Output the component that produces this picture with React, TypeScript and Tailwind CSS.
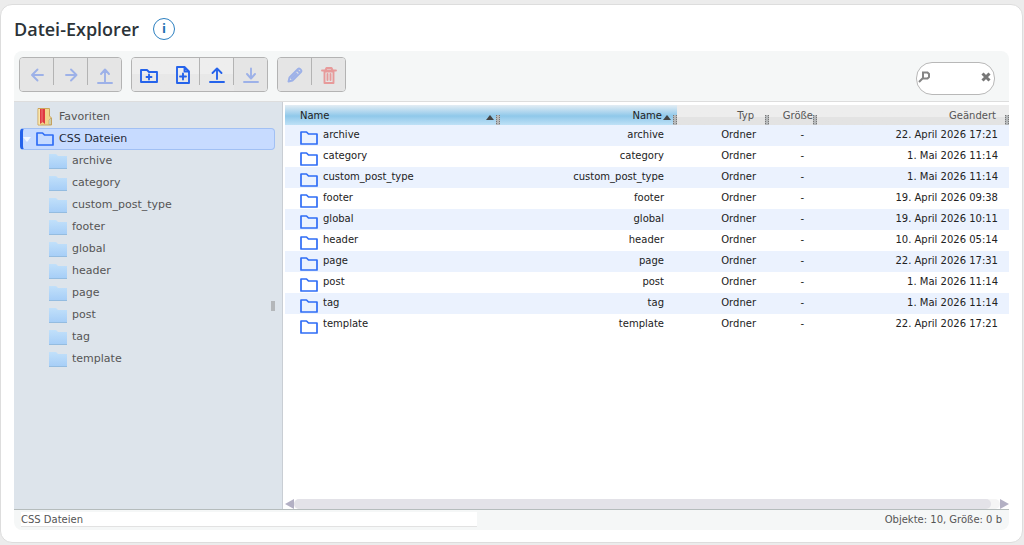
import type { ReactNode } from "react";
import { clsx } from "clsx";

const folders = [
  { name: "archive", date: "22. April 2026 17:21" },
  { name: "category", date: "1. Mai 2026 11:14" },
  { name: "custom_post_type", date: "1. Mai 2026 11:14" },
  { name: "footer", date: "19. April 2026 09:38" },
  { name: "global", date: "19. April 2026 10:11" },
  { name: "header", date: "10. April 2026 05:14" },
  { name: "page", date: "22. April 2026 17:31" },
  { name: "post", date: "1. Mai 2026 11:14" },
  { name: "tag", date: "1. Mai 2026 11:14" },
  { name: "template", date: "22. April 2026 17:21" },
];

type Tool = { label: string; icon: ReactNode; disabled?: boolean; danger?: boolean };

const toolGroups: Tool[][] = [
  [
    { label: "Zurück", disabled: true, icon: <path d="M15 9H4.500M9.500 3.500L4 9l5.500 5.500" /> },
    { label: "Vorwärts", disabled: true, icon: <path d="M4 9h10.500M9 3.500L14.500 9 9 14.500" /> },
    { label: "Übergeordneter Ordner", disabled: true, icon: <path d="M9 16V4M5 8l4-4.500L13 8M2 17h14" /> },
  ],
  [
    { label: "Neuer Ordner", icon: <path d="M1 4h6l2 2h8v10H1zM9 8.500v5M6.500 11h5" /> },
    { label: "Neue Datei", icon: <path d="M3 1h7.500L15 5.500V17H3zM10.500 1v4.500H15M9 7.500v6M6 10.500h6" /> },
    { label: "Hochladen", icon: <path d="M9 13V3M4.500 7L9 2.500 13.500 7M2 16h14" /> },
    { label: "Herunterladen", disabled: true, icon: <path d="M9 2.500V12M5 8l4 4.500L13 8M2 16h14" /> },
  ],
  [
    { label: "Umbenennen", disabled: true, icon: <path d="M2.500 15.500l1-4L12 3q1-1 2 0l1 1q1 1 0 2l-8.500 8.500zM11 4l3 3M5.500 12.500l5-5" /> },
    { label: "Löschen", disabled: true, danger: true, icon: <path d="M2 4.500h14M5.500 4l1-2h5l1 2M4.500 5v12h9V5M7.500 8v6M10.500 8v6M6 5.500h6" /> },
  ],
];

function FolderOutline() {
  return (
    <svg width="18" height="14" viewBox="0 0 18 14" fill="none" stroke="#2f6df6" strokeWidth="1.700" strokeLinejoin="round" className="shrink-0" aria-hidden="true">
      <path d="M1 1h5.500l2 2H17v10H1z" />
    </svg>
  );
}

function FolderFilled() {
  return (
    <svg width="18" height="16" viewBox="0 0 18 16" className="shrink-0" aria-hidden="true">
      <defs>
        <linearGradient id="folder" x1="0" y1="0" x2="0" y2="1">
          <stop offset="0" stopColor="#c1e0fa" />
          <stop offset="1" stopColor="#a5cdf7" />
        </linearGradient>
      </defs>
      <path d="M0 1h7l2 2h9v13H0z" fill="url(#folder)" />
      <path d="M0 15.500h18" stroke="#94bce0" />
    </svg>
  );
}

function Favorites() {
  return (
    <svg width="16" height="18" viewBox="0 0 16 18" className="shrink-0" aria-hidden="true">
      <path d="M1 .5h11.500V8l2 2v7H1z" fill="#f1d58b" stroke="#cba45c" />
      <path d="M1.500 1h2v15.500h-2z" fill="#fae8b1" />
      <path d="M3 1h5v15l-2.500-2L3 16z" fill="#df3940" />
      <path d="M4.500 1h1v13h-1z" fill="#f0787a" />
      <path d="M12 12l2-2v6.500h-2z" fill="#d7e3cb" stroke="#b79c64" strokeWidth=".6" />
    </svg>
  );
}

function ToolButton({ tool, last, divider }: { tool: Tool; last: boolean; divider: boolean }) {
  return (
    <button
      type="button"
      aria-label={tool.label}
      disabled={tool.disabled}
      className={clsx(
        "relative flex h-[33px] items-center justify-center",
        last ? "w-[33px]" : "w-[34px]",
        tool.disabled ? "bg-[#e5e5e5]" : "bg-linear-to-b from-[#eeeeee] from-50% to-[#e8e8e8] to-50%",
        tool.danger ? "text-[#e79a9a]" : tool.disabled ? "text-[#9db1e8]" : "text-[#2563eb]",
      )}
    >
      <svg width="18" height="18" viewBox="0 0 18 18" fill="none" stroke="currentColor" strokeWidth="1.900" strokeLinecap="round" strokeLinejoin="round" aria-hidden="true">
        {tool.icon}
      </svg>
      {divider && <span className="absolute top-0 right-0 h-[27px] w-px bg-[#b3b3b3]" />}
    </button>
  );
}

function Toolbar() {
  return (
    <div className="flex h-[51px] items-start justify-between rounded-t-lg border-b border-[#dddddd] bg-[#f5f7f7] pt-[6px] pr-[14px] pl-[5px]">
      <div className="flex gap-[9px]">
        {toolGroups.map((group) => (
          <div key={group[0].label} className="flex overflow-hidden rounded border border-[#b3b3b3]">
            {group.map((tool, i) => {
              const last = i === group.length - 1;
              return <ToolButton key={tool.label} tool={tool} last={last} divider={!last && tool.label !== "Neuer Ordner"} />;
            })}
          </div>
        ))}
      </div>
      <form className="mt-[5px] flex h-[33px] w-[79px] items-center rounded-2xl border border-[#b8b8b8] bg-white px-px">
        <svg width="12" height="12" viewBox="0 0 12 12" fill="none" stroke="#858585" strokeWidth="2" className="mb-[3px] shrink-0" aria-hidden="true">
          <path d="M5 1.500h4.500L11 3v3L9.500 7.500H5zM5 7l-4 4" />
        </svg>
        <input type="text" aria-label="Suchen" className="w-0 min-w-0 flex-1 text-[10px] outline-none" />
        <button type="reset" aria-label="Suche leeren" className="mr-[2px] mb-[3px] text-[#777777]">
          <svg width="10" height="10" viewBox="0 0 10 10" fill="none" stroke="currentColor" strokeWidth="3" aria-hidden="true">
            <path d="M1.500 1.500l7 7M8.500 1.500l-7 7" />
          </svg>
        </button>
      </form>
    </div>
  );
}

function Sidebar() {
  return (
    <nav className="relative w-[269px] shrink-0 border-r border-[#c9ced4] bg-[#dde4eb] pt-[4px] pr-[7px] pl-[6px] text-[11px] text-[#555555]">
      <a href="#favoriten" className="flex h-[22px] items-center gap-[6px] pl-[17px]">
        <Favorites />
        Favoriten
      </a>
      <a href="#css" className="flex h-[22px] items-center gap-[5px] rounded border border-l-3 border-[#a1c0f4] border-l-[#2563eb] bg-[#c7dbff] text-[#1f2937]">
        <svg width="8" height="5" viewBox="0 0 8 5" fill="#f4f8ff" aria-hidden="true">
          <path d="M0 0h8L4 5z" />
        </svg>
        <FolderOutline />
        CSS Dateien
      </a>
      <ul>
        {folders.map((folder) => (
          <li key={folder.name}>
            <a href={`#${folder.name}`} className="flex h-[22px] items-center gap-[5px] pl-[29px]">
              <FolderFilled />
              {folder.name}
            </a>
          </li>
        ))}
      </ul>
      {/* Resize grip */}
      <span className="absolute top-1/2 right-[7px] h-[10px] w-[4px] -translate-y-1/2 bg-[#b4b7ba]" />
    </nav>
  );
}

function Grip() {
  return (
    <svg width="4" height="10" viewBox="0 0 4 10" className="absolute right-0 bottom-0" aria-hidden="true">
      <path d="M0 0h4v10H0z" fill="#b5b8ba" />
      <path d="M.5 0v10M3.500 0v10" stroke="#777777" strokeDasharray="1 1" />
    </svg>
  );
}

function SortArrow() {
  return (
    <svg width="8" height="5" viewBox="0 0 8 5" fill="#444444" className="absolute right-[6px] bottom-[5px]" aria-hidden="true">
      <path d="M0 5l4-5 4 5z" />
    </svg>
  );
}

const sorted = "relative bg-linear-to-b from-[#e3edf4] via-[#8fc8ea] via-55% to-[#bfe1f6] font-normal text-[#222222]";
const plain = "relative bg-linear-to-b from-[#ededed] from-60% to-[#e3e3e3] to-60% font-normal text-[#555555]";

function FileTable() {
  return (
    <table className="w-full table-fixed text-[10px] text-[#222222]">
      <colgroup>
        <col />
        <col className="w-[177px]" />
        <col className="w-[92px]" />
        <col className="w-[48px]" />
        <col className="w-[192px]" />
      </colgroup>
      <thead>
        <tr className="h-[20px]">
          <th className={clsx(sorted, "pl-[15px] text-left")}>
            Name
            <SortArrow />
            <Grip />
          </th>
          <th className={clsx(sorted, "pr-[15px] text-right")}>
            Name
            <SortArrow />
            <Grip />
          </th>
          <th className={clsx(plain, "pr-[15px] text-right")}>
            Typ
            <Grip />
          </th>
          <th className={clsx(plain, "pr-[4px] text-right")}>
            Größe
            <Grip />
          </th>
          <th className={clsx(plain, "pr-[13px] text-right")}>
            Geändert
            <Grip />
          </th>
        </tr>
      </thead>
      <tbody>
        {folders.map((folder) => (
          <tr key={folder.name} className="h-[21px] odd:bg-[#ebf2fe]">
            <td className="pl-[15px]">
              <div className="flex h-[21px] items-end gap-[5px] pb-px">
                <FolderOutline />
                <span className="self-start leading-[19px]">{folder.name}</span>
              </div>
            </td>
            <td className="pr-[13px] pb-[2px] text-right">{folder.name}</td>
            <td className="pr-[13px] pb-[2px] text-right">Ordner</td>
            <td className="pr-[13px] pb-[2px] text-right">-</td>
            <td className="pr-[11px] pb-[2px] text-right">{folder.date}</td>
          </tr>
        ))}
      </tbody>
    </table>
  );
}

function ScrollBar() {
  return (
    <div className="flex h-[10px] items-center" aria-hidden="true">
      <svg width="9" height="10" viewBox="0 0 9 10" fill="#b3b0c4">
        <path d="M9 0v10L0 5z" />
      </svg>
      <div className="h-full flex-1 rounded-full bg-[#f5f5f5] pr-[9px]">
        <div className="h-full rounded-full bg-[#e3e2e8]" />
      </div>
      <svg width="9" height="10" viewBox="0 0 9 10" fill="#b3b0c4">
        <path d="M0 0v10l9-5z" />
      </svg>
    </div>
  );
}

export default function App() {
  return (
    <div className="flex min-h-screen bg-[#ececec] pt-[4px] pr-px pb-[2px] font-['DejaVu_Sans',sans-serif]">
      <main className="flex flex-1 flex-col rounded-xl border border-[#dddddd] bg-white px-[13px] pb-[12px]">
        <header className="flex h-[46px] items-center gap-[14px] pt-[2px]">
          <h1 className="font-['Open_Sans',sans-serif] text-[18px] font-semibold text-[#2c3338]">Datei-Explorer</h1>
          <button type="button" aria-label="Information" className="flex size-[22px] items-center justify-center rounded-full border border-[#2c7fc0] font-['Open_Sans',sans-serif] text-[13px] font-bold text-[#2271b1]">
            i
          </button>
        </header>
        <Toolbar />
        <div className="flex flex-1 border-b border-[#b5bcbc]">
          <Sidebar />
          <div className="flex min-w-0 flex-1 flex-col justify-between pt-[3px] pl-[2px]">
            <FileTable />
            <ScrollBar />
          </div>
        </div>
        <footer className="flex h-[20px] items-start justify-between rounded-b-lg bg-[#f5f7f7] pt-[2px] pr-[7px] pl-[7px] text-[10px] text-[#555555]">
          <span className="h-[15px] w-[456px] border-b border-[#e2e2e2] bg-white leading-[15px]">CSS Dateien</span>
          <span className="leading-[15px]">Objekte: 10, Größe: 0 b</span>
        </footer>
      </main>
    </div>
  );
}
